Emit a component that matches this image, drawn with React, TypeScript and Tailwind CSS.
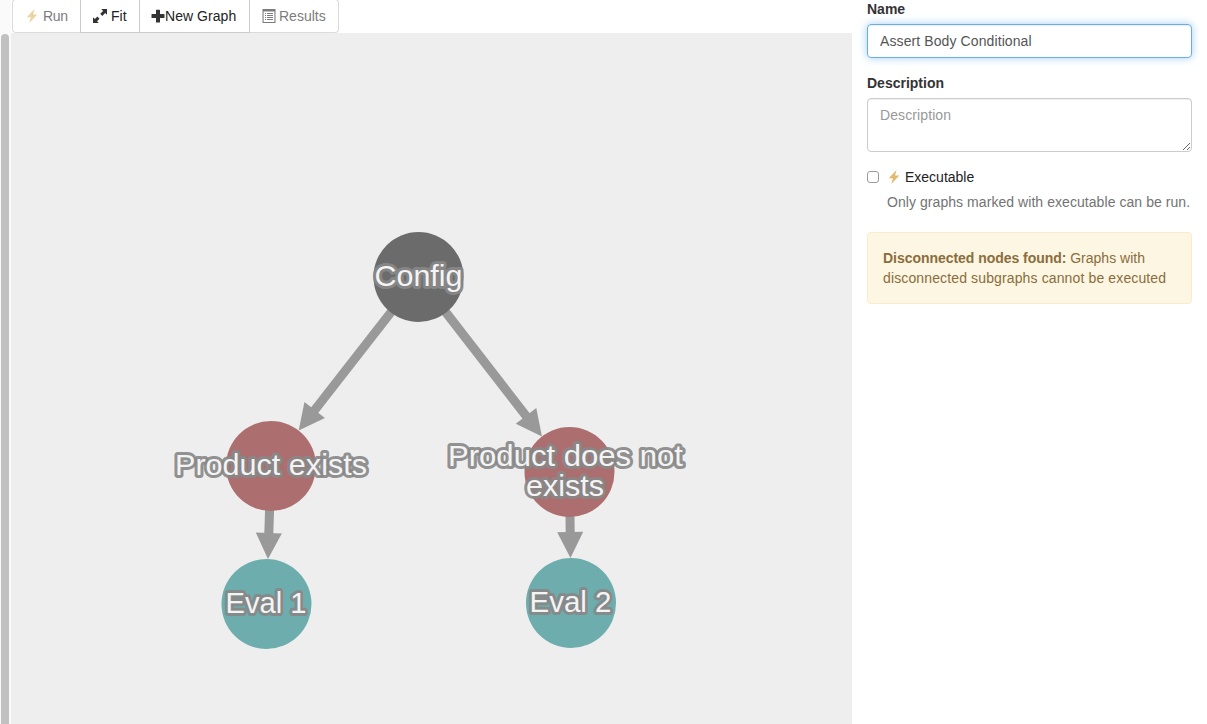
import React from "react";

function Flash({ className }: { className: string }) {
  return (
    <svg viewBox="0 0 12 14" className={className} fill="currentColor">
      <path d="M8.500 0 .8 8.300H4.900L3.300 14 11.300 5.500H7.100Z" />
    </svg>
  );
}

function ResizeFull() {
  return (
    <svg viewBox="0 0 14 14" className="h-3.5 w-3.5" fill="currentColor">
      <path d="M8.200 0H14v5.800l-1.800-1.800-2.900 2.900-2.100-2.100 2.900-2.900ZM0 8.200V14h5.800l-1.800-1.800 2.500-2.500-2.100-2.100-2.500 2.500Z" />
    </svg>
  );
}

function Plus() {
  return (
    <svg viewBox="0 0 14 14" className="h-3.5 w-3.5" fill="currentColor">
      <path d="M5 1.3q0-.5.5-.5h3q.5 0 .5.5V5h4q.5 0 .5.5v3q0 .5-.5.5H9v4q0 .5-.5.5h-3Q5 13.500 5 13V9H1q-.5 0-.5-.5v-3Q.5 5 1 5h4Z" />
    </svg>
  );
}

function ListAlt() {
  return (
    <svg viewBox="0 0 14 14" className="h-3.5 w-3.5" fill="currentColor">
      <path
        fillRule="evenodd"
        d="M.5 0h13v14H.5ZM1.600 2.500V13h10.800V2.500ZM3 4h1v1H3ZM5 4h6v1H5ZM3 6h1v1H3ZM5 6h6v1H5ZM3 8h1v1H3ZM5 8h6v1H5ZM3 10h1v1H3ZM5 10h6v1H5Z"
      />
    </svg>
  );
}

type Node = { x: number; y: number; fill: string };

const nodes: Node[] = [
  { x: 418.5, y: 277, fill: "#6b6b6b" },
  { x: 271, y: 466, fill: "#ad6e6f" },
  { x: 569.5, y: 472, fill: "#ad6e6f" },
  { x: 266.5, y: 604, fill: "#6eadad" },
  { x: 571, y: 603, fill: "#6eadad" },
];

const labels = [
  { text: "Config", x: 418.5, y: 286, w: 88 },
  { text: "Product exists", x: 271, y: 475, w: 192 },
  { text: "Product does not", x: 565.5, y: 466, w: 235 },
  { text: "exists", x: 565, y: 496, w: 78 },
  { text: "Eval 1", x: 266, y: 613, w: 81 },
  { text: "Eval 2", x: 570.5, y: 612, w: 82 },
];

const links = [
  [0, 1],
  [0, 2],
  [1, 3],
  [2, 4],
];

function Edge({ from, to }: { from: Node; to: Node }) {
  const length = Math.hypot(to.x - from.x, to.y - from.y);
  const angle = (Math.atan2(to.y - from.y, to.x - from.x) * 180) / Math.PI;
  const tip = length - 45;
  return (
    <g transform={`translate(${from.x} ${from.y}) rotate(${angle})`} fill="#999">
      <rect x="40" y="-4.5" width={tip - 40 - 22} height="9" />
      <path d={`M${tip} 0 L${tip - 26} -13 L${tip - 26} 13 Z`} />
    </g>
  );
}

function Graph() {
  return (
    <svg viewBox="11 33 841 691" className="block h-[691px] w-[841px]">
      {links.map(([a, b]) => (
        <Edge key={`${a}-${b}`} from={nodes[a]} to={nodes[b]} />
      ))}
      {nodes.map((n) => (
        <circle key={`${n.x}-${n.y}`} cx={n.x} cy={n.y} r="45" fill={n.fill} />
      ))}
      {labels.map((l) => (
        <text
          key={`${l.text}-${l.y}`}
          x={l.x}
          y={l.y}
          textLength={l.w}
          lengthAdjust="spacingAndGlyphs"
          textAnchor="middle"
          fontSize="30"
          fill="#f4f4f4"
          stroke="#888"
          strokeOpacity="0.93"
          strokeWidth="6"
          strokeLinejoin="round"
          paintOrder="stroke"
        >
          {l.text}
        </text>
      ))}
    </svg>
  );
}

const button = "flex h-[34px] items-center border bg-white";

export default function App() {
  return (
    <div className="flex h-[724px] w-[1207px] overflow-hidden bg-white font-['Liberation_Sans',Arial,sans-serif] text-sm leading-5 text-[#333]">
      <div className="w-[11px] shrink-0 bg-[#fafafa] pt-[34px] pl-px">
        <div className="h-[720px] w-2 rounded-t bg-[#c1c1c1]" />
      </div>
      <main className="flex w-[841px] shrink-0 flex-col">
        <div className="-mt-px flex h-[34px] pl-px">
          <button className={`${button} w-[68px] rounded-l border-r-0 border-[#dbdbdb] pl-[13px] text-[#7c7c7c]`}>
            <Flash className="mr-[5px] h-3.5 w-3 text-[#ecd3a2]" />
            <span className="tracking-[-0.3px]">Run</span>
          </button>
          <button className={`${button} w-[60px] border-[#ccc] pl-3`}>
            <ResizeFull />
            <span className="ml-1 text-[#222]">Fit</span>
          </button>
          <button className={`${button} w-[110px] border-l-0 border-[#ccc] pl-[11px]`}>
            <Plus />
            <span className="tracking-[0.05px] text-[#222]">New Graph</span>
          </button>
          <button className={`${button} w-[89px] rounded-r border-l-0 border-[#dbdbdb] pl-3 text-[#7c7c7c]`}>
            <ListAlt />
            <span className="ml-[3px]">Results</span>
          </button>
        </div>
        <div className="h-[691px] bg-[#eee]">
          <Graph />
        </div>
      </main>
      <aside className="flex w-[355px] flex-col px-[15px]">
        <label className="-mt-px h-[25px] font-bold">Name</label>
        <input
          className="h-[34px] w-[325px] rounded border border-[#66afe9] px-3 tracking-[0.1px] text-[#555] shadow-[inset_0_1px_1px_rgba(0,0,0,.075),0_0_8px_rgba(102,175,233,.6)] outline-none"
          defaultValue="Assert Body Conditional"
        />
        <label className="mt-[15px] h-[25px] font-bold">Description</label>
        <textarea
          className="block h-[54px] w-[325px] rounded border border-[#ccc] px-3 py-1.5 tracking-[0.1px] text-[#555] shadow-[inset_0_1px_1px_rgba(0,0,0,.075)] outline-none placeholder:text-[#999]"
          placeholder="Description"
        />
        <label className="mt-[15px] flex h-5 items-center">
          <input
            type="checkbox"
            className="h-3 w-3 appearance-none rounded-[3px] border border-[#9b9b9b] bg-white"
          />
          <Flash className="ml-[9px] h-3.5 w-3 text-[#e2b96d]" />
          <span className="ml-[5px] text-[#222]">Executable</span>
        </label>
        <p className="mt-[5px] pl-5 tracking-[0.06px] whitespace-nowrap text-[#737373]">
          Only graphs marked with executable can be run.
        </p>
        <div className="mt-5 h-[72px] w-[325px] rounded border border-[#faebcc] bg-[#fdf6e3] p-[15px] text-[#8a6d3b]">
          <strong className="tracking-[-0.04px]">Disconnected nodes found:</strong> Graphs with
          <br />
          <span className="tracking-[0.13px]">disconnected subgraphs cannot be executed</span>
        </div>
      </aside>
    </div>
  );
}
